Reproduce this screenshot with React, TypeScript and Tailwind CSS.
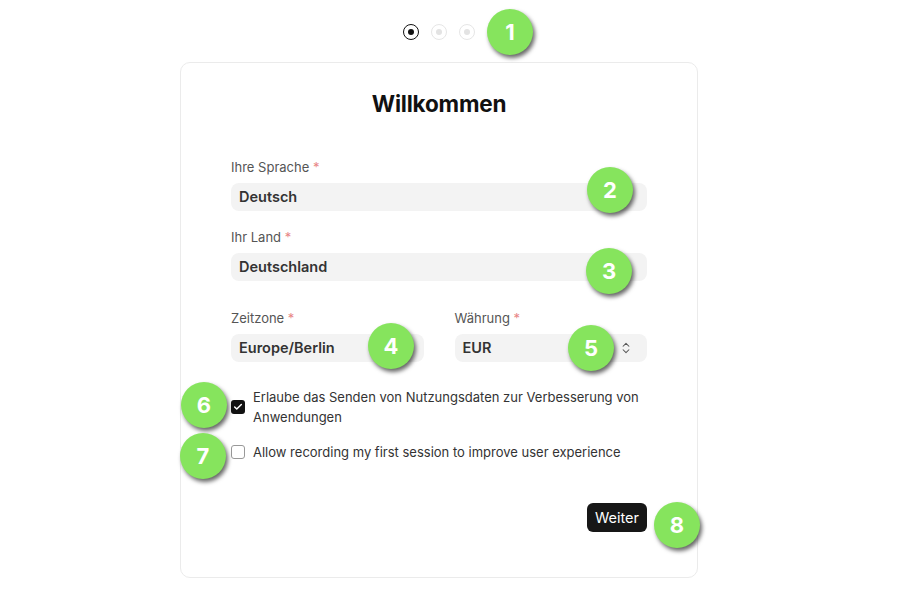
import { Check, ChevronsUpDown } from "lucide-react"

const BADGES: { n: number; cls: string }[] = [
  { n: 1, cls: "left-[487px] top-[9px]" },
  { n: 2, cls: "left-[587px] top-[167px]" },
  { n: 3, cls: "left-[586px] top-[248px]" },
  { n: 4, cls: "left-[368px] top-[323px]" },
  { n: 5, cls: "left-[568px] top-[325px]" },
  { n: 6, cls: "left-[181px] top-[382px]" },
  { n: 7, cls: "left-[180px] top-[433px]" },
  { n: 8, cls: "left-[654px] top-[502px]" },
]

function Field({ label, value, className = "" }: { label: string; value: string; className?: string }) {
  return (
    <div className={`flex flex-col ${className}`}>
      <label className="text-[13px] leading-5 text-[#555]">
        {label} <span className="text-[#e88585]">*</span>
      </label>
      <div className="mt-[6px] h-[28px] rounded-lg bg-[#f3f3f3] flex items-center justify-between pl-2 pr-[14px]">
        <span className="text-[14.5px] font-semibold text-[#333]">{value}</span>
        <ChevronsUpDown className="w-[14px] h-[14px] text-[#555]" strokeWidth={1.75} />
      </div>
    </div>
  )
}

export default function App() {
  return (
    <div
      className="relative min-h-screen bg-white pr-[21px] flex flex-col items-center"
      style={{ fontFamily: "Inter, 'Noto Sans', sans-serif" }}
    >
      {/* Step dots */}
      <div className="flex gap-3 pt-6">
        <div className="w-4 h-4 rounded-full border-[1.5px] border-[#111] flex items-center justify-center">
          <div className="w-[6px] h-[6px] rounded-full bg-[#111]" />
        </div>
        <div className="w-4 h-4 rounded-full border-[1.5px] border-[#e6e6e6] flex items-center justify-center">
          <div className="w-[6px] h-[6px] rounded-full bg-[#e3e3e3]" />
        </div>
        <div className="w-4 h-4 rounded-full border-[1.5px] border-[#e6e6e6] flex items-center justify-center">
          <div className="w-[6px] h-[6px] rounded-full bg-[#e3e3e3]" />
        </div>
      </div>

      {/* Card */}
      <div className="mt-[22px] w-[518px] border border-[#ebebeb] rounded-[10px] px-[50px] pt-[27px] pb-[45px] flex flex-col">
        <h1 className="text-center text-[22.5px] leading-7 font-bold text-[#111] tracking-[-0.2px]">Willkommen</h1>

        <Field label="Ihre Sprache" value="Deutsch" className="mt-[39px]" />
        <Field label="Ihr Land" value="Deutschland" className="mt-4" />

        <div className="mt-[27px] grid grid-cols-2 gap-[31px]">
          <Field label="Zeitzone" value="Europe/Berlin" />
          <Field label="Währung" value="EUR" />
        </div>

        <div className="mt-[25px] flex items-start gap-2">
          <div className="mt-[13px] w-[14px] h-[14px] shrink-0 rounded-[3px] bg-[#111] flex items-center justify-center">
            <Check className="w-[10px] h-[10px] text-white" strokeWidth={3.5} />
          </div>
          <p className="text-[13px] leading-5 text-[#333]">
            Erlaube das Senden von Nutzungsdaten zur Verbesserung von Anwendungen
          </p>
        </div>

        <div className="mt-[15px] flex items-start gap-2">
          <div className="mt-[3px] w-[14px] h-[14px] shrink-0 rounded-[3px] border border-[#999] bg-white" />
          <p className="text-[13px] leading-5 text-[#333]">
            Allow recording my first session to improve user experience
          </p>
        </div>

        <div className="mt-[41px] flex justify-end">
          <button className="h-[29px] px-2 rounded-md bg-[#171717] text-white text-[14.5px]">Weiter</button>
        </div>
      </div>

      {BADGES.map(b => (
        <div
          key={b.n}
          className={`absolute ${b.cls} w-[46px] h-[46px] rounded-full bg-[#86e45d] shadow-[2px_3px_4px_rgba(0,0,0,0.6)] flex items-center justify-center text-white font-bold text-[22px]`}
        >
          {b.n}
        </div>
      ))}
    </div>
  )
}
